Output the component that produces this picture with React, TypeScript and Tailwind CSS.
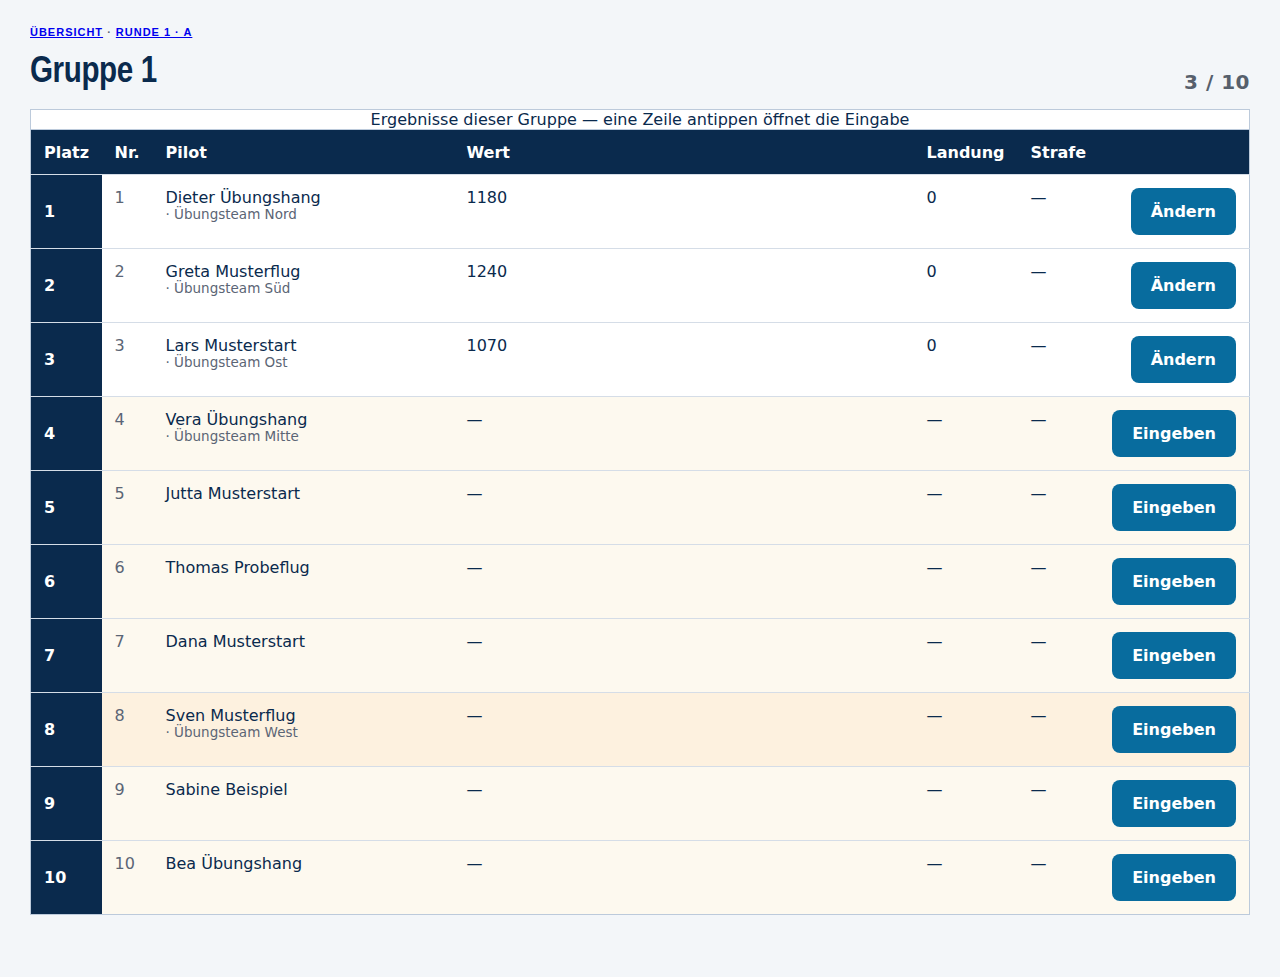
type Row = {
  platz: number;
  nr: number;
  name: string;
  team?: string;
  wert?: string;
  landung?: string;
  done: boolean;
  active?: boolean;
};

const rows: Row[] = [
  { platz: 1, nr: 1, name: 'Dieter Übungshang', team: 'Übungsteam Nord', wert: '1180', landung: '0', done: true },
  { platz: 2, nr: 2, name: 'Greta Musterflug', team: 'Übungsteam Süd', wert: '1240', landung: '0', done: true },
  { platz: 3, nr: 3, name: 'Lars Musterstart', team: 'Übungsteam Ost', wert: '1070', landung: '0', done: true },
  { platz: 4, nr: 4, name: 'Vera Übungshang', team: 'Übungsteam Mitte', done: false },
  { platz: 5, nr: 5, name: 'Jutta Musterstart', done: false },
  { platz: 6, nr: 6, name: 'Thomas Probeflug', done: false },
  { platz: 7, nr: 7, name: 'Dana Musterstart', done: false },
  { platz: 8, nr: 8, name: 'Sven Musterflug', team: 'Übungsteam West', done: false, active: true },
  { platz: 9, nr: 9, name: 'Sabine Beispiel', done: false },
  { platz: 10, nr: 10, name: 'Bea Übungshang', done: false },
];

const App = () => {
  return (
    <div className="min-h-[977px] bg-[#f3f6f9] px-[30px] pt-[25px] pb-10 text-[#0a2a4d] font-['DejaVu_Sans',sans-serif]">
      <nav className="font-['Liberation_Sans',sans-serif] text-[11px] font-bold tracking-[0.09em] leading-[14px]">
        <a href="#" className="text-[#0000ee] underline">ÜBERSICHT</a>
        <span className="text-[#5b6575]"> · </span>
        <a href="#" className="text-[#0000ee] underline">RUNDE 1 · A</a>
      </nav>
      <div className="flex items-end justify-between mb-[19px]">
        <h1 className="mt-[10px] font-['Liberation_Sans',sans-serif] text-[37px] font-bold leading-[41px] tracking-[-0.5px]">
          <span className="inline-block origin-left scale-x-[0.8]">Gruppe 1</span>
        </h1>
        <div className="text-[20px] font-bold text-[#565f6c] leading-[24px] tracking-[0.5px] mb-[-4px]">3 / 10</div>
      </div>

      <table className="w-full table-fixed border-collapse border border-[#bccadb] bg-white">
        <caption className="caption-top border border-b-0 border-[#bccadb] bg-white text-[16px] leading-[19px] text-[#0a2a4d]">
          Ergebnisse dieser Gruppe — eine Zeile antippen öffnet die Eingabe
        </caption>
        <thead>
          <tr className="bg-[#0a2a4d] text-white text-[16px] font-bold text-left">
            <th className="w-[71px] px-[13px] pt-[2px] h-[45px]">Platz</th>
            <th className="w-[51px] px-[13px] pt-[2px]">Nr.</th>
            <th className="w-[301px] px-[13px] pt-[2px]">Pilot</th>
            <th className="w-[460px] px-[13px] pt-[2px]">Wert</th>
            <th className="w-[104px] px-[13px] pt-[2px]">Landung</th>
            <th className="w-[80px] px-[13px] pt-[2px]">Strafe</th>
            <th className="px-[13px]" />
          </tr>
        </thead>
        <tbody>
          {rows.map((r) => (
            <tr
              key={r.nr}
              className={`border-t border-[#d5dde7] ${
                r.done ? 'bg-white' : r.active ? 'bg-[#fdf1df]' : 'bg-[#fdf9ef]'
              }`}
            >
              <th className="bg-[#0a2a4d] text-white font-bold text-[16px] text-left px-[13px] align-middle">
                {r.platz}
              </th>
              <td className="px-[13px] pt-[13px] align-top text-[16px] leading-5 text-[#5b6575]">{r.nr}</td>
              <td className="px-[13px] pt-[13px] align-top">
                <div className="text-[16px] leading-[19px]">{r.name}</div>
                {r.team && <div className="text-[13.5px] leading-[14px] text-[#5b6575]">· {r.team}</div>}
              </td>
              <td className="px-[13px] pt-[13px] align-top text-[16px] leading-5">{r.wert ?? '—'}</td>
              <td className="px-[13px] pt-[13px] align-top text-[16px] leading-5">{r.landung ?? '—'}</td>
              <td className="px-[13px] pt-[13px] align-top text-[16px] leading-5">—</td>
              <td className="pr-[13px] py-[13px] align-middle text-right">
                <button
                  type="button"
                  className="h-[47px] rounded-[8px] bg-[#086c9e] px-[20px] text-[16px] font-bold text-white"
                >
                  {r.done ? 'Ändern' : 'Eingeben'}
                </button>
              </td>
            </tr>
          ))}
        </tbody>
      </table>
    </div>
  );
};

export default App;
